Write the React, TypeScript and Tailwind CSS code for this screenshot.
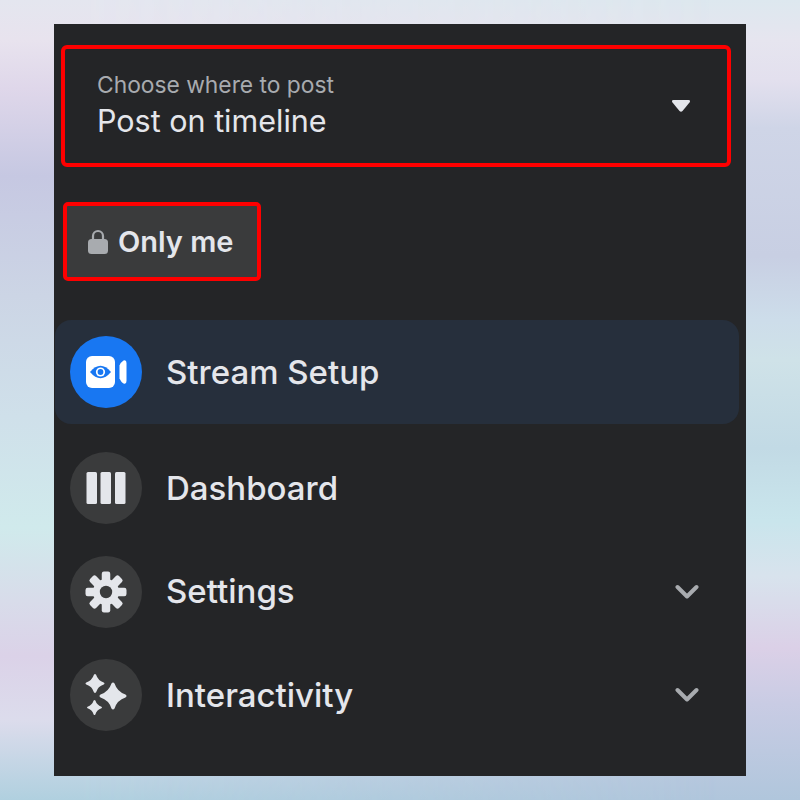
import React from 'react';

const sans = 'font-["Inter","Roboto","Liberation_Sans",sans-serif]';

// four pointed star with softened tips
const sparklePath = (cx: number, cy: number, r: number) => {
    const t = r * 0.11;
    const c = r * 0.3;
    return `M${cx - t} ${cy - r + t}
        Q${cx} ${cy - r - t * 0.4} ${cx + t} ${cy - r + t}
        Q${cx + c} ${cy - c} ${cx + r - t} ${cy - t}
        Q${cx + r + t * 0.4} ${cy} ${cx + r - t} ${cy + t}
        Q${cx + c} ${cy + c} ${cx + t} ${cy + r - t}
        Q${cx} ${cy + r + t * 0.4} ${cx - t} ${cy + r - t}
        Q${cx - c} ${cy + c} ${cx - r + t} ${cy + t}
        Q${cx - r - t * 0.4} ${cy} ${cx - r + t} ${cy - t}
        Q${cx - c} ${cy - c} ${cx - t} ${cy - r + t}Z`;
};

const VideoIcon = () => (
    <svg width="42" height="34" viewBox="0 0 42 34">
        <rect x="1" y="1" width="29" height="32" rx="6" fill="#fff" />
        <path d="M34.5 10.5 Q36 7 38.5 5.5 Q41.5 4.5 41.5 8 V26 Q41.5 29.5 38.5 28.5 Q36 27 34.5 23.5 Z" fill="#fff" />
        <path d="M5 17 Q15.5 4.5 26 17 Q15.5 29.5 5 17Z" fill="#1877f2" />
        <circle cx="15.5" cy="17" r="4.6" fill="#fff" />
        <circle cx="15.5" cy="17" r="2.9" fill="#1877f2" />
    </svg>
);

const ColumnsIcon = () => (
    <svg width="40" height="34" viewBox="0 0 40 34" fill="#e4e6eb">
        <rect x="0.5" y="1" width="10.5" height="32" rx="1.5" />
        <rect x="14.5" y="1" width="10.5" height="32" rx="1.5" />
        <rect x="29" y="1" width="10.5" height="32" rx="1.5" />
    </svg>
);

const GearIcon = () => {
    const teeth = [0, 45, 90, 135, 180, 225, 270, 315];
    return (
        <svg width="42" height="42" viewBox="0 0 42 42">
            {teeth.map((deg) => (
                <rect key={deg} x="16.75" y="0.5" width="8.5" height="12" rx="2.2" fill="#e4e6eb" transform={`rotate(${deg} 21 21)`} />
            ))}
            <circle cx="21" cy="21" r="13" fill="#e4e6eb" />
            <circle cx="21" cy="21" r="6.2" fill="#3a3b3c" />
        </svg>
    );
};

const SparkleIcon = () => (
    <svg width="42" height="42" viewBox="0 0 42 42" fill="#e4e6eb">
        <path d={sparklePath(28, 22, 14)} />
        <path d={sparklePath(10, 9.5, 9.8)} />
        <path d={sparklePath(9.5, 33.5, 7.8)} />
    </svg>
);

const Chevron = () => (
    <svg width="24" height="16" viewBox="0 0 24 16" fill="none" stroke="#a8abaf" strokeWidth="4" strokeLinecap="round" strokeLinejoin="round">
        <path d="M2.5 3 L12 12.5 L21.5 3" />
    </svg>
);

const MenuRow: React.FC<{ label: string; icon: React.ReactNode; chevron?: boolean }> = ({ label, icon, chevron }) => (
    <div className="h-[72px] flex items-center pl-[16px] pr-[47px]">
        <div className="w-[72px] h-[72px] rounded-full bg-[#3a3b3c] flex items-center justify-center shrink-0">
            {icon}
        </div>
        <span className="ml-[24px] text-[33px] leading-none font-medium text-[#e4e6eb]">{label}</span>
        {chevron && <span className="ml-auto flex"><Chevron /></span>}
    </div>
);

const App: React.FC = () => {
    return (
        <div className={`relative w-[800px] h-[800px] overflow-hidden pt-[24px] pl-[54px] bg-[linear-gradient(180deg,#dde8ef_0%,#e6e5ef_5%,#e3e0ee_10%,#cfd5e7_16%,#c8cfe3_32%,#cdddea_40%,#cfe2e8_45%,#c2dae5_56%,#c9e5ec_65%,#d8e3ed_72%,#dbd0e7_81%,#c9cce4_88%,#b0c6dc_100%)] ${sans}`}>
            {/* left side of the backdrop has its own banding */}
            <div className="absolute inset-0 bg-[linear-gradient(180deg,#e4e6ef_0%,#e8e3ee_5%,#dfd7ea_11%,#c6c8e2_22%,#ccd5e5_37%,#cfe0ea_52%,#d0eaec_66%,#d8dcea_75%,#dbd2e8_82%,#dcdcec_90%,#b0d0df_100%)] [mask-image:linear-gradient(90deg,black_10%,transparent_90%)]" />
            <div className="relative w-[692px] h-[752px] bg-[#242527] pt-[21px] flex flex-col">
                <div className="ml-[7px] w-[670px] h-[122px] border-[4px] border-[#fe0000] rounded-[6px] pl-[32px] pr-[36px] flex items-center justify-between">
                    <div className="flex flex-col">
                        <span className="text-[22.8px] leading-[30px] text-[#a8abaf]">Choose where to post</span>
                        <span className="text-[30.5px] leading-[42px] text-[#e4e6eb]">Post on timeline</span>
                    </div>
                    <svg width="20" height="14" viewBox="0 0 20 14">
                        <path d="M2.5 1 H17.5 Q20 1 18.5 3.5 L11.5 12 Q10 13.5 8.5 12 L1.5 3.5 Q0 1 2.5 1Z" fill="#e4e6eb" />
                    </svg>
                </div>

                <div className="ml-[9px] mt-[35px] w-[198px] h-[79px] border-[4px] border-[#fe0000] rounded-[5px] bg-[#3a3b3c] flex items-center pl-[21px]">
                    <svg width="20" height="26" viewBox="0 0 20 26" className="shrink-0">
                        <path d="M5 12 V7 a5 5 0 0 1 10 0 V12" fill="none" stroke="#a8abaf" strokeWidth="2.2" />
                        <rect x="0" y="10" width="20" height="15" rx="3.5" fill="#a8abaf" />
                    </svg>
                    <span className="ml-[10px] text-[29px] leading-none font-semibold text-[#e4e6eb]">Only me</span>
                </div>

                <div className="mt-[39px] h-[104px] w-[684px] ml-[1px] rounded-[16px] bg-[#262f3c] flex items-center pl-[15px]">
                    <div className="w-[72px] h-[72px] rounded-full bg-[#1877f2] flex items-center justify-center">
                        <VideoIcon />
                    </div>
                    <span className="ml-[24px] text-[33px] leading-none font-medium text-[#e4e6eb]">Stream Setup</span>
                </div>

                <div className="mt-[28px] flex flex-col gap-[31.5px]">
                    <MenuRow label="Dashboard" icon={<ColumnsIcon />} />
                    <MenuRow label="Settings" icon={<GearIcon />} chevron />
                    <MenuRow label="Interactivity" icon={<SparkleIcon />} chevron />
                </div>
            </div>
        </div>
    );
};

export default App;
